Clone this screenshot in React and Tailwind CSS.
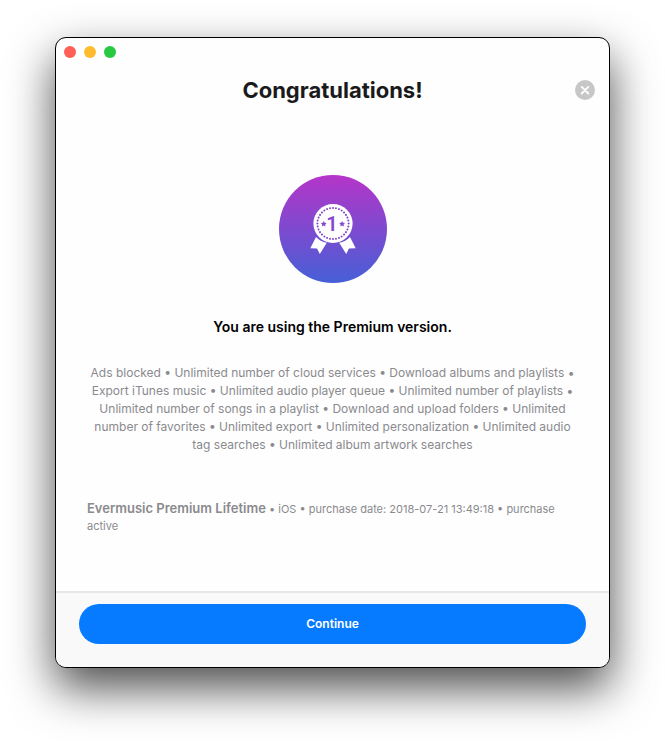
const features = [
  "Ads blocked",
  "Unlimited number of cloud services",
  "Download albums and playlists",
  "Export iTunes music",
  "Unlimited audio player queue",
  "Unlimited number of playlists",
  "Unlimited number of songs in a playlist",
  "Download and upload folders",
  "Unlimited number of favorites",
  "Unlimited export",
  "Unlimited personalization",
  "Unlimited audio tag searches",
  "Unlimited album artwork searches",
];

function Medal() {
  return (
    <svg width="108" height="108" viewBox="0 0 108 108" role="img" aria-label="First place medal">
      <defs>
        <linearGradient id="disc" x1="0" y1="0" x2="0" y2="1">
          <stop offset="0" stopColor="#b535c9" />
          <stop offset="1" stopColor="#465fd6" />
        </linearGradient>
      </defs>
      <circle cx="54" cy="54" r="54" fill="url(#disc)" />
      <path fill="#fff" d="M37 62 L31.3 73.2 L38 73.6 L40.8 79 L47.8 67.8 C43.4 67 39.7 65 37 62Z" />
      <path fill="#fff" d="M71 62 L76.7 73.2 L70 73.6 L67.2 79 L60.2 67.8 C64.6 67 68.3 65 71 62Z" />
      <circle cx="54" cy="48.5" r="19.6" fill="#fff" />
      <circle
        cx="54"
        cy="48.5"
        r="15.6"
        fill="none"
        stroke="#8344cb"
        strokeWidth="2"
        strokeLinecap="round"
        pathLength="96"
        strokeDasharray="0.01 2.99"
      />
      <path id="star" fill="#8748cd" d="M44.7 46l.9 1.8 2 .2-1.4 1.4.3 2-1.8-1-1.8 1 .3-2-1.4-1.4 2-.2z" />
      <use href="#star" x="18.4" />
      <text
        x="53"
        y="56"
        textAnchor="middle"
        fill="#8748cd"
        fontFamily="Roboto, 'Liberation Sans', sans-serif"
        fontSize="20"
        fontWeight="600"
      >
        1
      </text>
    </svg>
  );
}

export default function App() {
  return (
    <div className="min-h-screen bg-white px-[55px] py-[37px] font-['Inter','Liberation_Sans',sans-serif]">
      <main className="overflow-hidden rounded-[11px] border border-black bg-[#fefefe] shadow-[0_20px_46px_rgba(0,0,0,0.7)]">
        <div className="flex gap-2 px-2 pt-2">
          <button aria-label="Close window" className="size-3 rounded-full bg-[#ff5f57]" />
          <button aria-label="Minimize window" className="size-3 rounded-full bg-[#febc2e]" />
          <button aria-label="Zoom window" className="size-3 rounded-full bg-[#28c840]" />
        </div>

        <header className="mt-3 grid h-10 grid-cols-[20px_1fr_20px] items-center px-[14px]">
          <h1 className="col-start-2 text-center text-[22px] leading-7 font-bold text-[#1a1a1c]">Congratulations!</h1>
          <button aria-label="Dismiss" className="flex size-5 items-center justify-center rounded-full bg-[#c7c7c7]">
            <svg width="20" height="20" viewBox="0 0 20 20" fill="none" stroke="#fff" strokeWidth="1.8" strokeLinecap="round">
              <path d="M6.7 6.9l6.6 6.6M13.3 6.9l-6.6 6.6" />
            </svg>
          </button>
        </header>

        <section className="px-[31px] pb-14">
          <div className="mt-[65px] flex justify-center">
            <Medal />
          </div>
          <h2 className="mt-[34px] text-center text-[14px] leading-5 font-semibold text-black">
            You are using the Premium version.
          </h2>
          <p className="mt-[27px] text-center text-[12px] leading-[18px] text-[#8a8a8e]">{features.join(" • ")}</p>
          <p className="mt-[46px] text-[11px] leading-[17px] text-[#8a8a8e]">
            <strong className="text-[13px] font-semibold">Evermusic Premium Lifetime</strong> • iOS • purchase date: 2018-07-21
            13:49:18 • purchase active
          </p>
        </section>

        <footer className="border-t-2 border-[#e6e6e6] bg-[#f9f9f9] px-[23px] pt-[11px] pb-[23px]">
          <button className="h-10 w-full rounded-full bg-[#067bff] text-[12px] leading-4 font-semibold text-white">
            Continue
          </button>
        </footer>
      </main>
    </div>
  );
}
